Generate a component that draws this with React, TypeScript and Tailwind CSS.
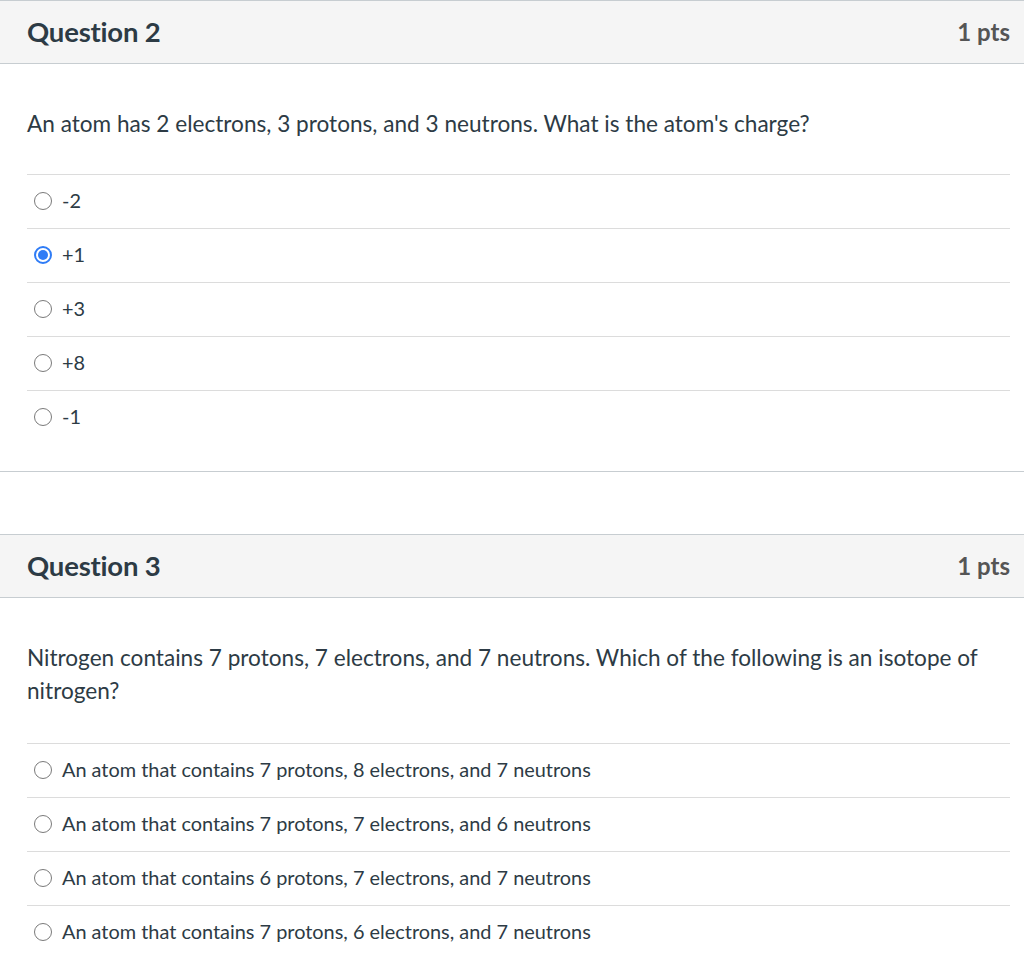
const QUESTIONS = [
  {
    title: "Question 2",
    points: "1 pts",
    text: "An atom has 2 electrons, 3 protons, and 3 neutrons. What is the atom's charge?",
    answers: ["-2", "+1", "+3", "+8", "-1"],
    selected: 1,
    gap: "mb-[34px]",
  },
  {
    title: "Question 3",
    points: "1 pts",
    text: "Nitrogen contains 7 protons, 7 electrons, and 7 neutrons. Which of the following is an isotope of nitrogen?",
    answers: [
      "An atom that contains 7 protons, 8 electrons, and 7 neutrons",
      "An atom that contains 7 protons, 7 electrons, and 6 neutrons",
      "An atom that contains 6 protons, 7 electrons, and 7 neutrons",
      "An atom that contains 7 protons, 6 electrons, and 7 neutrons",
    ],
    selected: -1,
    gap: "mb-[36px]",
  },
];

function Radio({ checked }: { checked: boolean }) {
  if (checked) {
    return (
      <span className="w-[18px] h-[18px] rounded-full border-[2px] border-[#2f7cf6] flex items-center justify-center flex-shrink-0">
        <span className="w-[10px] h-[10px] rounded-full bg-[#2f7cf6]" />
      </span>
    );
  }
  return <span className="w-[18px] h-[18px] rounded-full border-[1.5px] border-[#7a7a7a] bg-white flex-shrink-0" />;
}

export default function App() {
  return (
    <div className="min-h-screen bg-white text-[#2d3b45]" style={{ fontFamily: "Lato, 'Open Sans', sans-serif" }}>
      <div className="flex flex-col gap-[62px]">
        {QUESTIONS.map((q) => (
          <div key={q.title} className="border-t border-b border-[#c7cdd1]">
            {/* Header */}
            <div className="h-[63px] bg-[#f5f5f5] border-b border-[#c7cdd1] flex items-center justify-between pl-[27px] pr-[14px]">
              <span className="text-[27.5px] font-bold tracking-[-0.2px]">{q.title}</span>
              <span className="text-[24px] font-bold text-[#555]">{q.points}</span>
            </div>

            {/* Body */}
            <div className="pl-[27px] pr-[14px] pt-[43px] pb-[27px]">
              <p className={`text-[22.6px] leading-[33px] pr-[20px] ${q.gap}`}>{q.text}</p>
              <div>
                {q.answers.map((a, i) => (
                  <div key={a} className="h-[54px] border-t border-[#dcdcdc] flex items-center gap-[10px] pl-[7px] pb-[2px]">
                    <Radio checked={i === q.selected} />
                    <span className="text-[19.9px]">{a}</span>
                  </div>
                ))}
              </div>
            </div>
          </div>
        ))}
      </div>
    </div>
  );
}
